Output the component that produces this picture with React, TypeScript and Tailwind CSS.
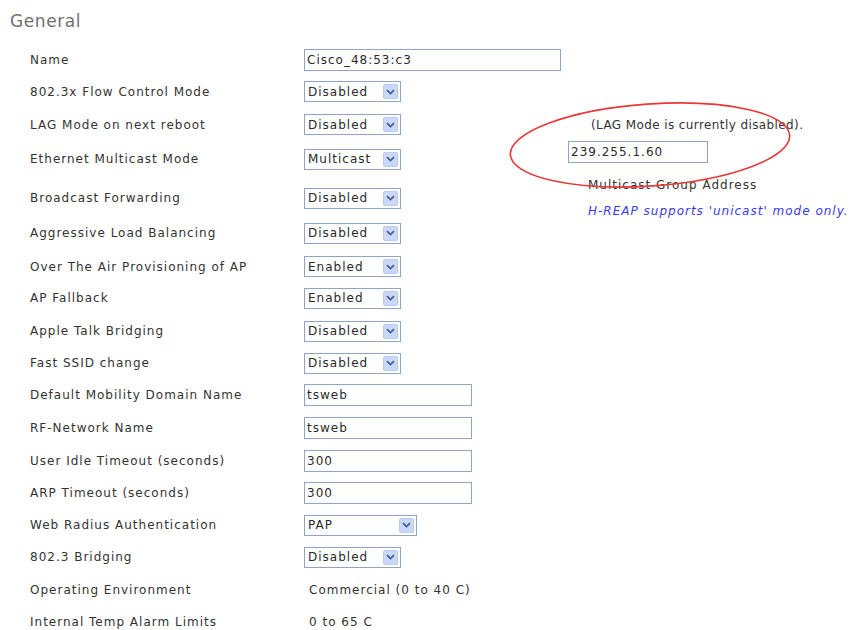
import type { ReactNode } from 'react';

const font = { fontFamily: '"DejaVu Sans", Verdana, sans-serif' };

function Select({ value, wide = false }: { value: string; wide?: boolean }) {
  return (
    <div
      className={`flex items-center justify-between h-[21px] border border-[#8fa5c8] bg-white pl-[3px] pr-[2px] ${
        wide ? 'w-[113px]' : 'w-[97px]'
      }`}
    >
      <span className="text-[12px] leading-none tracking-[1px] text-[#2a2a2a]">{value}</span>
      <span className="flex items-center justify-center w-[15px] h-[15px] bg-[#c9d8fb] border border-[#b8caf0] rounded-[2px]">
        <svg width="9" height="6" viewBox="0 0 9 6">
          <path d="M1 1.2 L4.5 4.6 L8 1.2" fill="none" stroke="#4a5f8a" strokeWidth="1.8" />
        </svg>
      </span>
    </div>
  );
}

function TextBox({ value, width }: { value: string; width: string }) {
  return (
    <div className={`flex items-center h-[22px] border border-[#8fa5c8] bg-white pl-[2px] ${width}`}>
      <span className="text-[12px] leading-none tracking-[1px] text-[#2a2a2a]">{value}</span>
    </div>
  );
}

function Row({
  label,
  h,
  pt = '',
  children,
}: {
  label: string;
  h: string;
  pt?: string;
  children?: ReactNode;
}) {
  return (
    <div className={`flex items-center ${h} ${pt}`}>
      <div className="w-[274px] text-[12px] leading-[14px] tracking-[1px] text-[#333]">{label}</div>
      {children}
    </div>
  );
}

export default function App() {
  return (
    <div className="relative w-[851px] h-[630px] bg-white overflow-hidden" style={font}>
      <h2 className="pl-[10px] pt-[11px] text-[17px] leading-[20px] tracking-[0.6px] text-[#707070]">
        General
      </h2>

      <div className="pl-[30px] pt-[13px]">
        <Row label="Name" h="h-[31px]" pt="pt-[1px]">
          <TextBox value="Cisco_48:53:c3" width="w-[257px]" />
        </Row>
        <Row label="802.3x Flow Control Mode" h="h-[33px]">
          <Select value="Disabled" />
        </Row>
        <Row label="LAG Mode on next reboot" h="h-[33px]">
          <Select value="Disabled" />
          <span className="ml-[190px] text-[12px] leading-[14px] tracking-[0.4px] text-[#333]">
            (LAG Mode is currently disabled).
          </span>
        </Row>

        {/* multicast settings sit beside two rows */}
        <div className="flex items-start h-[74px]">
          <div className="w-[538px]">
            <Row label="Ethernet Multicast Mode" h="h-[36px]">
              <Select value="Multicast" />
            </Row>
            <Row label="Broadcast Forwarding" h="h-[38px]" pt="pt-[4px]">
              <Select value="Disabled" />
            </Row>
          </div>
          <div className="flex flex-col">
            <TextBox value="239.255.1.60" width="w-[140px]" />
            <span className="ml-[20px] mt-[15px] text-[12px] leading-[14px] tracking-[1px] text-[#333]">
              Multicast Group Address
            </span>
            <span className="ml-[20px] mt-[12px] text-[12px] leading-[14px] tracking-[1px] italic text-[#3a3af5]">
              H-REAP supports 'unicast' mode only.
            </span>
          </div>
        </div>

        <Row label="Aggressive Load Balancing" h="h-[36px]">
          <Select value="Disabled" />
        </Row>
        <Row label="Over The Air Provisioning of AP" h="h-[31px]">
          <Select value="Enabled" />
        </Row>
        <Row label="AP Fallback" h="h-[32px]">
          <Select value="Enabled" />
        </Row>
        <Row label="Apple Talk Bridging" h="h-[34px]">
          <Select value="Disabled" />
        </Row>
        <Row label="Fast SSID change" h="h-[30px]">
          <Select value="Disabled" />
        </Row>
        <Row label="Default Mobility Domain Name" h="h-[34px]">
          <TextBox value="tsweb" width="w-[168px]" />
        </Row>
        <Row label="RF-Network Name" h="h-[32px]">
          <TextBox value="tsweb" width="w-[168px]" />
        </Row>
        <Row label="User Idle Timeout (seconds)" h="h-[34px]">
          <TextBox value="300" width="w-[168px]" />
        </Row>
        <Row label="ARP Timeout (seconds)" h="h-[30px]">
          <TextBox value="300" width="w-[168px]" />
        </Row>
        <Row label="Web Radius Authentication" h="h-[34px]">
          <Select value="PAP" wide />
        </Row>
        <Row label="802.3 Bridging" h="h-[30px]">
          <Select value="Disabled" />
        </Row>
        <Row label="Operating Environment" h="h-[36px]">
          <span className="pl-[5px] text-[12px] leading-[14px] tracking-[1px] text-[#333]">
            Commercial (0 to 40 C)
          </span>
        </Row>
        <Row label="Internal Temp Alarm Limits" h="h-[22px]" pt="pt-[6px]">
          <span className="pl-[5px] text-[12px] leading-[14px] tracking-[1px] text-[#333]">0 to 65 C</span>
        </Row>
      </div>

      {/* red ring drawn around the multicast address */}
      <svg className="absolute left-0 top-0 pointer-events-none" width="851" height="630">
        <ellipse
          cx="650"
          cy="145"
          rx="140"
          ry="41"
          transform="rotate(-4 650 145)"
          fill="none"
          stroke="#e8383a"
          strokeWidth="1.6"
        />
      </svg>
    </div>
  );
}
